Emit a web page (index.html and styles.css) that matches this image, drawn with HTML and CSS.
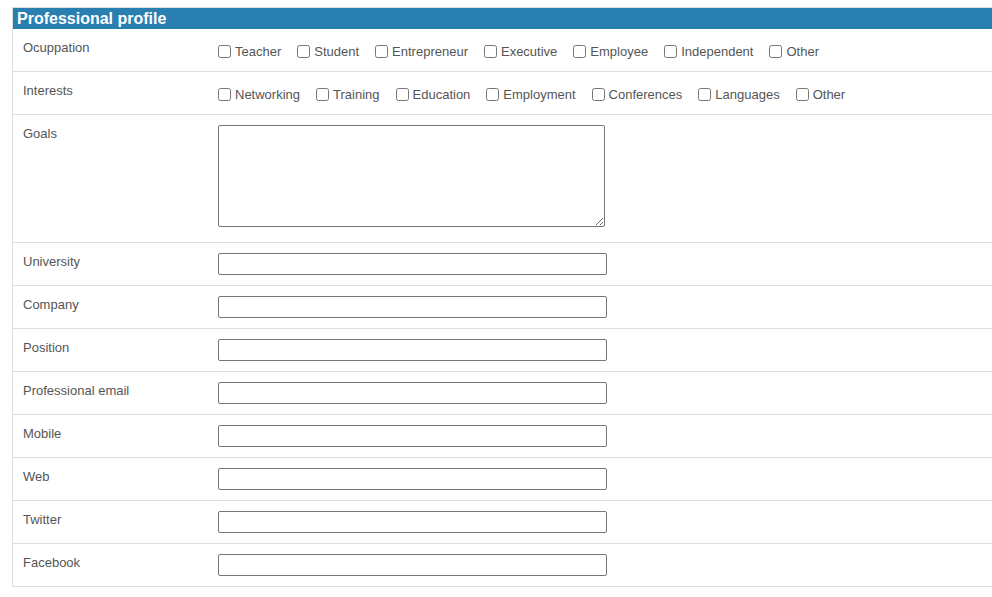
FILE: index.html
```html
<!DOCTYPE html>
<html lang="en">
<head>
    <meta charset="UTF-8">
    <meta name="viewport" content="width=device-width, initial-scale=1.0">
    <title>Professional profile</title>
    <link rel="stylesheet" href="styles.css">
</head>
<body>
    <section class="profile">
        <div class="profile-title">Professional profile</div>

        <div class="row">
            <div class="row-label">Ocuppation</div>
            <div class="row-field options">
                <label class="option"><input type="checkbox"> Teacher</label>
                <label class="option"><input type="checkbox"> Student</label>
                <label class="option"><input type="checkbox"> Entrepreneur</label>
                <label class="option"><input type="checkbox"> Executive</label>
                <label class="option"><input type="checkbox"> Employee</label>
                <label class="option"><input type="checkbox"> Independent</label>
                <label class="option"><input type="checkbox"> Other</label>
            </div>
        </div>

        <div class="row">
            <div class="row-label">Interests</div>
            <div class="row-field options">
                <label class="option"><input type="checkbox"> Networking</label>
                <label class="option"><input type="checkbox"> Training</label>
                <label class="option"><input type="checkbox"> Education</label>
                <label class="option"><input type="checkbox"> Employment</label>
                <label class="option"><input type="checkbox"> Conferences</label>
                <label class="option"><input type="checkbox"> Languages</label>
                <label class="option"><input type="checkbox"> Other</label>
            </div>
        </div>

        <div class="row">
            <div class="row-label">Goals</div>
            <div class="row-field"><textarea class="goals"></textarea></div>
        </div>

        <div class="row">
            <div class="row-label">University</div>
            <div class="row-field"><input type="text" class="text-input"></div>
        </div>

        <div class="row">
            <div class="row-label">Company</div>
            <div class="row-field"><input type="text" class="text-input"></div>
        </div>

        <div class="row">
            <div class="row-label">Position</div>
            <div class="row-field"><input type="text" class="text-input"></div>
        </div>

        <div class="row">
            <div class="row-label">Professional email</div>
            <div class="row-field"><input type="email" class="text-input"></div>
        </div>

        <div class="row">
            <div class="row-label">Mobile</div>
            <div class="row-field"><input type="tel" class="text-input"></div>
        </div>

        <div class="row">
            <div class="row-label">Web</div>
            <div class="row-field"><input type="text" class="text-input"></div>
        </div>

        <div class="row">
            <div class="row-label">Twitter</div>
            <div class="row-field"><input type="text" class="text-input"></div>
        </div>

        <div class="row">
            <div class="row-label">Facebook</div>
            <div class="row-field"><input type="text" class="text-input"></div>
        </div>
    </section>
</body>
</html>
```

FILE: styles.css
```css
html, body {
    overflow: hidden;
}

body {
    margin: 0;
    padding: 7px 0 0 12px;
    font-family: Arial, "Liberation Sans", sans-serif;
    font-size: 13px;
    color: #555;
    background-color: #fff;
}

.profile {
    width: 1000px;
    border-top: 1px solid #ddd;
    border-left: 1px solid #ddd;
}

.profile-title {
    height: 21px;
    line-height: 21px;
    padding-left: 4px;
    background-color: #2980b0;
    color: #fff;
    font-size: 16px;
    font-weight: bold;
}

.row {
    display: grid;
    grid-template-columns: 205px 1fr;
    border-bottom: 1px solid #ddd;
}

.row-label {
    padding: 11px 10px 9px;
    line-height: 15px;
}

.row-field {
    padding: 10px 0;
}

.options {
    display: flex;
    align-items: center;
    height: 22px;
    padding-top: 11px;
    padding-bottom: 9px;
}

.option {
    display: inline-flex;
    align-items: center;
    margin-right: 16px;
    line-height: 15px;
}

.option input {
    width: 13px;
    height: 13px;
    margin: 0 4px 0 0;
}

.text-input {
    display: block;
    box-sizing: border-box;
    width: 389px;
    height: 22px;
    margin: 0;
    border: 1px solid #767676;
    border-radius: 2px;
    font-family: inherit;
}

.goals {
    display: block;
    box-sizing: border-box;
    width: 387px;
    height: 102px;
    margin: 0 0 5px 0;
    border: 1px solid #767676;
    border-radius: 2px;
    font-family: inherit;
}
```
